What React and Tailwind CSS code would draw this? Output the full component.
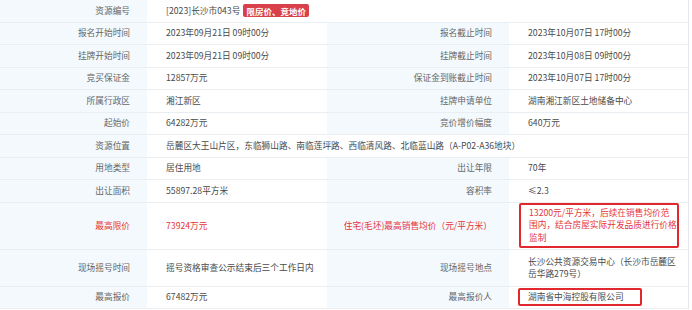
import React from 'react';

const rows = [
  { l1: '资源编号', v1: '[2023]长沙市043号', tag: '限房价、竞地价' },
  { l1: '报名开始时间', v1: '2023年09月21日 09时00分', l2: '报名截止时间', v2: '2023年10月07日 17时00分' },
  { l1: '挂牌开始时间', v1: '2023年09月21日 09时00分', l2: '挂牌截止时间', v2: '2023年10月08日 09时00分' },
  { l1: '竞买保证金', v1: '12857万元', l2: '保证金到账截止时间', v2: '2023年10月07日 17时00分' },
  { l1: '所属行政区', v1: '湘江新区', l2: '挂牌申请单位', v2: '湖南湘江新区土地储备中心' },
  { l1: '起始价', v1: '64282万元', l2: '竞价增价幅度', v2: '640万元' },
  { l1: '资源位置', wide: '岳麓区大王山片区，东临狮山路、南临莲坪路、西临清风路、北临蓝山路（A-P02-A36地块）' },
  { l1: '用地类型', v1: '居住用地', l2: '出让年限', v2: '70年' },
  { l1: '出让面积', v1: '55897.28平方米', l2: '容积率', v2: '≤2.3' },
];

const Label = ({ children, red }) => (
  <div className={`bg-[#f3f9fd] flex items-center justify-end pr-[17px] whitespace-nowrap ${red ? 'text-[#e5343a]' : 'text-[#666]'}`}>
    {children}
  </div>
);

const Value = ({ children, red, className = '' }) => (
  <div className={`flex items-center pl-[19px] whitespace-nowrap ${red ? 'text-[#e5343a]' : 'text-[#4a4a4a]'} ${className}`}>
    {children}
  </div>
);

const Row = ({ children, h = 'h-[22.5px]' }) => (
  <div className={`grid grid-cols-[147px_180px_182px_179px] border-b border-[#e9eef3] ${h}`}>{children}</div>
);

export default function App() {
  return (
    <div
      className="w-[689px] bg-white border-r border-[#e3e8ee] text-[8.7px] leading-[12px]"
      style={{ fontFamily: '"Noto Sans CJK SC", "Noto Sans", sans-serif' }}
    >
      {rows.map((r) => (
        <Row key={r.l1}>
          <Label>{r.l1}</Label>
          {r.wide ? (
            <Value className="col-span-3">{r.wide}</Value>
          ) : r.tag ? (
            <Value className="col-span-3">
              {r.v1}
              <span className="ml-[3px] bg-[#d9414a] text-white font-bold rounded-[2px] px-[3px] h-[13px] flex items-center text-[8.5px]">
                {r.tag}
              </span>
            </Value>
          ) : (
            <>
              <Value>{r.v1}</Value>
              <Label>{r.l2}</Label>
              <Value>{r.v2}</Value>
            </>
          )}
        </Row>
      ))}
      <Row h="h-[47px]">
        <Label red>最高限价</Label>
        <Value red>73924万元</Value>
        <Label red>住宅(毛坯)最高销售均价（元/平方米）</Label>
        <div className="flex items-center pl-[10px]">
          <div className="border-2 border-[#e0282e] rounded-[2px] w-[160px] pl-[8px] py-[2px] text-[#e5343a] leading-[12.5px] whitespace-nowrap">
            13200元/平方米，后续在销售均价范<br />围内，结合房屋实际开发品质进行价格<br />监制
          </div>
        </div>
      </Row>
      <Row h="h-[37px]">
        <Label>现场摇号时间</Label>
        <Value>摇号资格审查公示结束后三个工作日内</Value>
        <Label>现场摇号地点</Label>
        <Value className="leading-[11.5px]">
          <span>长沙公共资源交易中心（长沙市岳麓区<br />岳华路279号）</span>
        </Value>
      </Row>
      <Row>
        <Label>最高报价</Label>
        <Value>67482万元</Value>
        <Label>最高报价人</Label>
        <div className="flex items-center pl-[9px]">
          <div className="border-2 border-[#e0282e] rounded-[2px] h-[18px] w-[124px] pl-[8px] flex items-center text-[#4a4a4a] whitespace-nowrap">
            湖南省中海控股有限公司
          </div>
        </div>
      </Row>
    </div>
  );
}
